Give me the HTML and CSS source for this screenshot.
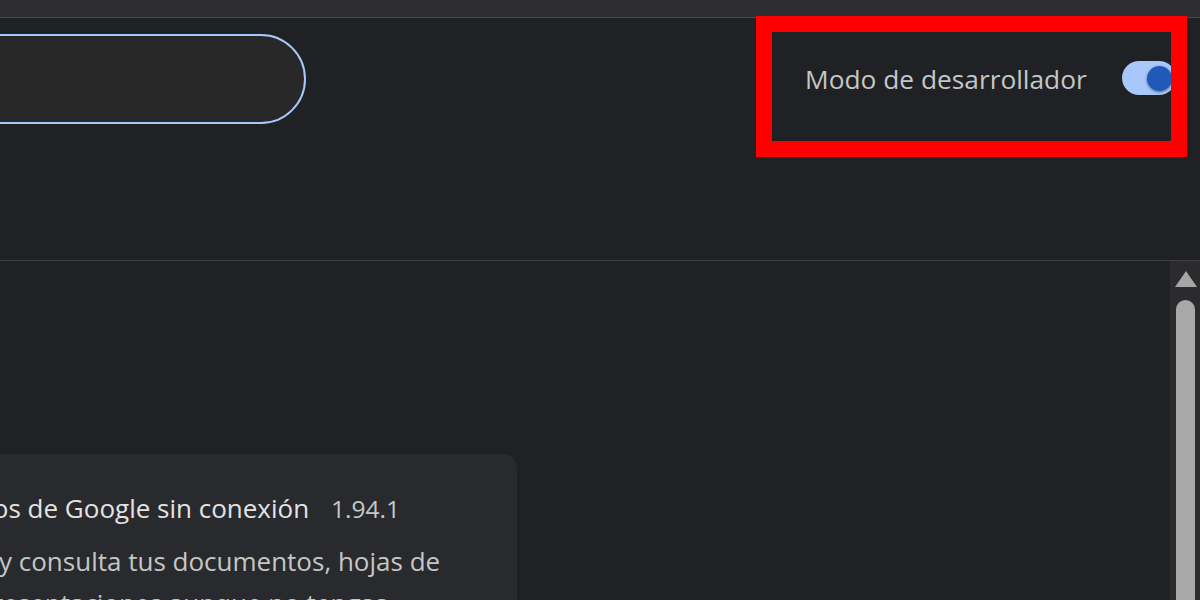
FILE: index.html
```html
<!DOCTYPE html>
<html lang="es">
<head>
<meta charset="utf-8">
<title>Extensiones</title>
<link rel="stylesheet" href="styles.css">
</head>
<body>
<div class="topbar"></div>
<header class="header">
  <div class="search"></div>
  <div class="devmode">
    <span class="devmode-label">Modo de desarrollador</span>
    <span class="toggle"><span class="knob"></span></span>
    <div class="highlight"></div>
  </div>
</header>
<main class="content">
  <section class="list">
    <article class="card">
      <div class="card-title">
        <span class="name">Documentos de Google sin conexión</span>
        <span class="version">1.94.1</span>
      </div>
      <p class="desc">Edita, crea y consulta tus documentos, hojas de cálculo y presentaciones aunque no tengas conexión a Internet.</p>
    </article>
  </section>
  <aside class="scrollbar">
    <span class="arrow"></span>
    <span class="thumb"></span>
  </aside>
</main>
</body>
</html>
```
FILE: styles.css
```css
html, body {
  margin: 0;
  padding: 0;
}
body {
  width: 1200px;
  height: 600px;
  overflow: hidden;
  background: #202124;
  font-family: "Open Sans", "Noto Sans", sans-serif;
  color: #e3e3e3;
}
.topbar {
  height: 17px;
  background: #2e2d31;
  border-bottom: 1px solid #4a4a4e;
}
.header {
  height: 242px;
  display: flex;
  justify-content: space-between;
  align-items: flex-start;
  border-bottom: 1px solid #3c3d41;
}
.search {
  margin-top: 16px;
  margin-left: -100px;
  width: 402px;
  height: 86px;
  border: 2.5px solid #a8c7fa;
  border-radius: 46px;
  background: #292828;
}
.devmode {
  position: relative;
  width: 444px;
  height: 139px;
  display: flex;
  align-items: flex-start;
  padding: 43px 0 0 49px;
  box-sizing: border-box;
}
.devmode-label {
  font-size: 26.3px;
  line-height: 36px;
  color: #c4c7c5;
}
.toggle {
  margin-left: auto;
  margin-right: 24px;
  width: 54px;
  height: 34px;
  border-radius: 17px;
  background: #a8c7fa;
  display: flex;
  align-items: center;
  justify-content: flex-end;
  padding-right: 4px;
  box-sizing: border-box;
}
.knob {
  width: 25px;
  height: 25px;
  border-radius: 50%;
  background: #1f5ab8;
  box-shadow: 0 1px 3px rgba(0,0,0,0.5);
}
.highlight {
  position: absolute;
  left: 0;
  top: -2px;
  width: 431px;
  height: 141px;
  box-sizing: border-box;
  border: 16px solid #ff0000;
  pointer-events: none;
}
.content {
  display: flex;
  height: 339px;
}
.list {
  flex: 1;
  padding-top: 193px;
  overflow: hidden;
}
.card {
  margin-left: -156px;
  width: 673px;
  height: 200px;
  background: #292a2d;
  border-radius: 14px;
  padding: 36px 0 0 22px;
  box-sizing: border-box;
}
.card-title {
  font-size: 26px;
  white-space: nowrap;
  display: flex;
  align-items: baseline;
  gap: 22px;
}
.name {
  color: #e3e3e3;
}
.version {
  font-size: 24.5px;
  color: #c7c7c7;
}
.desc {
  margin: 13.5px 0 0;
  font-size: 26px;
  line-height: 42px;
  color: #c4c7c5;
  width: 600px;
}
.scrollbar {
  width: 30px;
  background: #2b2b2d;
  display: flex;
  flex-direction: column;
  align-items: center;
  padding-top: 10px;
  box-sizing: border-box;
}
.arrow {
  width: 0;
  height: 0;
  border-left: 11px solid transparent;
  border-right: 11px solid transparent;
  border-bottom: 16px solid #a6a6a6;
  margin-left: 2px;
}
.thumb {
  margin-top: 13px;
  margin-left: 1px;
  width: 19px;
  flex: 1;
  background: #a8a8a8;
  border-radius: 10px 10px 0 0;
}
```
